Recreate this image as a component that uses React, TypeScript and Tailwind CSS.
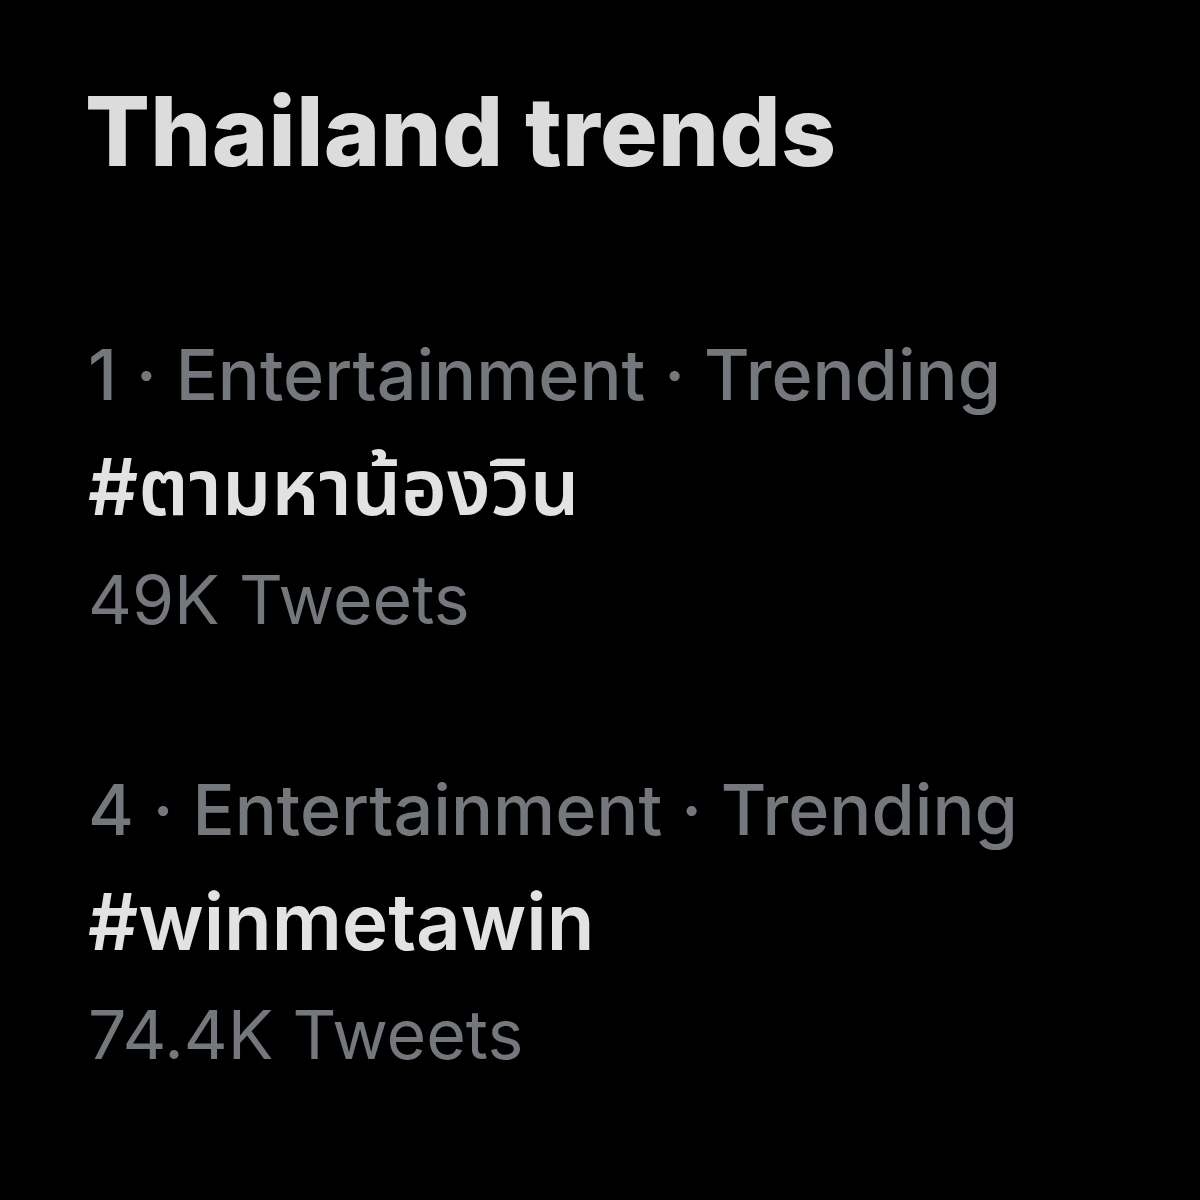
const trends = [
  { rank: 1, category: 'Entertainment', name: '#ตามหาน้องวิน', count: '49K Tweets' },
  { rank: 4, category: 'Entertainment', name: '#winmetawin', count: '74.4K Tweets' },
];

const font = { fontFamily: 'Inter, "Noto Sans Thai", "Noto Sans", "DejaVu Sans", sans-serif' };

export default function App() {
  return (
    <div className="min-h-[1200px] w-[1200px] bg-black pl-[88px] pt-[83px]" style={font}>
      {/* Header */}
      <h1 className="-ml-[3px] text-[96px] leading-[96px] font-extrabold tracking-[0.004em] text-[#dcdcdc]">
        Thailand trends
      </h1>

      {/* Trend list */}
      <div className="mt-[140px] flex flex-col gap-[99px]">
        {trends.map((trend) => (
          <div key={trend.rank} className="flex flex-col">
            <div className="text-[70px] leading-[112px] font-medium text-[#74777b]">
              {trend.rank} · {trend.category} · Trending
            </div>
            <div className="text-[78px] leading-[112px] font-semibold text-[#e2e2e2]">
              {trend.name}
            </div>
            <div className="text-[68px] leading-[112px] text-[#74777b]">{trend.count}</div>
          </div>
        ))}
      </div>
    </div>
  );
}
